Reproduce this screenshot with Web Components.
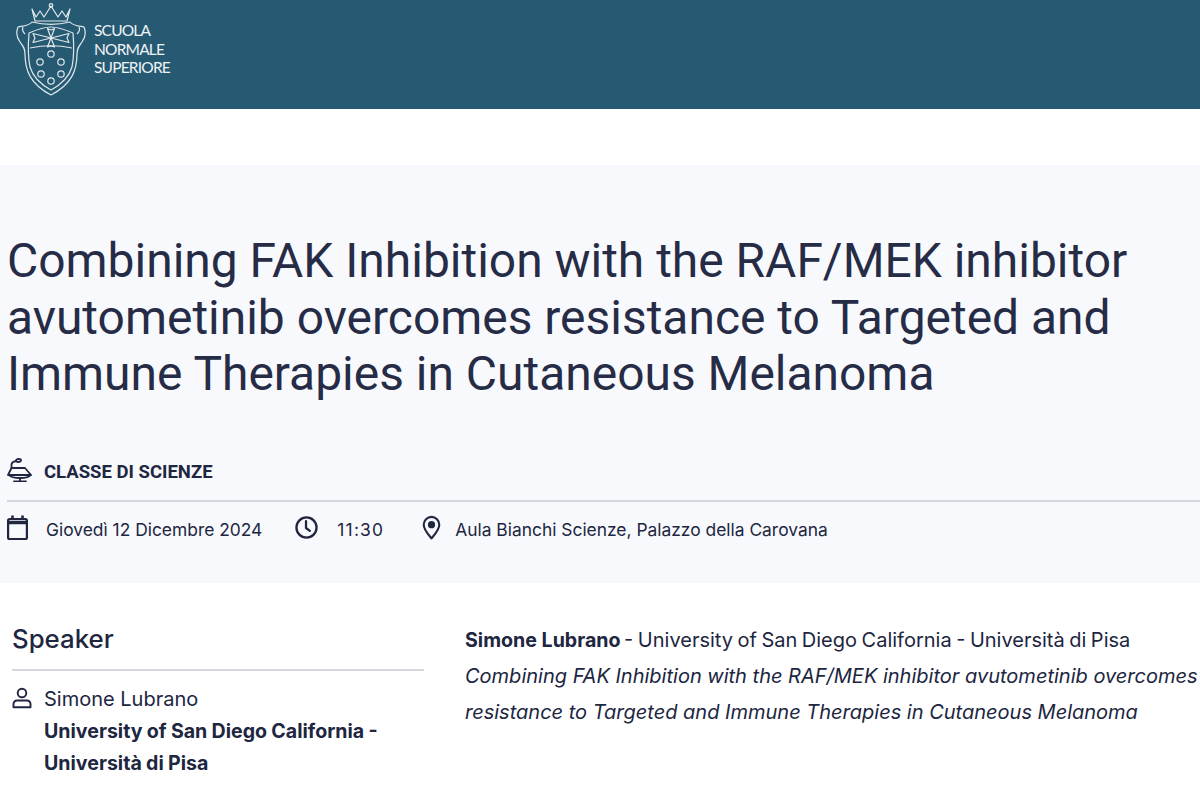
<!DOCTYPE html>
<html lang="it">
<head>
<meta charset="utf-8">
<title>Seminario</title>
<style>
  html, body { margin: 0; background: #fff; }
  body { font-family: Inter, "Liberation Sans", sans-serif; color: #20263f; overflow: hidden; height: 792px; }
</style>
</head>
<body>
<site-header></site-header>
<event-hero>
  <span slot="title">Combining FAK Inhibition with the RAF/MEK inhibitor avutometinib overcomes resistance to Targeted and Immune Therapies in Cutaneous Melanoma</span>
  <span slot="category">CLASSE DI SCIENZE</span>
  <meta-item icon="calendar" style="--gap:18px;--after:33px">Giovedì 12 Dicembre 2024</meta-item>
  <meta-item icon="clock" style="--gap:19px;--after:38px;letter-spacing:1.2px">11:30</meta-item>
  <meta-item icon="pin" style="--gap:14px">Aula Bianchi Scienze, Palazzo della Carovana</meta-item>
</event-hero>
<event-body>
  <speaker-card slot="side" name="Simone Lubrano">University of San Diego California - Università di Pisa</speaker-card>
  <p><b style="font-size:19.6px">Simone Lubrano</b> <span style="word-spacing:-1.1px;margin-left:-2px">- University of San Diego California - Università di Pisa</span><br>
  <i>Combining FAK Inhibition with the RAF/MEK inhibitor avutometinib overcomes resistance to Targeted and Immune Therapies in Cutaneous Melanoma</i></p>
</event-body>

<script>
const ICONS = {
  calendar: `<svg width="21" height="26" viewBox="0 0 21 26" fill="none" stroke="currentColor" stroke-width="2.2"><rect x="1.1" y="4" width="18.800" height="20" rx="1.500"/><path d="M1.100 7.500h18.800" stroke-width="3.500"/><path d="M5.500 .5v4M15.500 .5v4" stroke-width="2.600"/></svg>`,
  clock: `<svg width="23" height="23" viewBox="0 0 24 24" fill="none" stroke="currentColor" stroke-width="2.400"><circle cx="12" cy="12" r="10.500"/><path d="M11.500 5.500v7l4 3" stroke-linecap="round" stroke-linejoin="round"/></svg>`,
  pin: `<svg width="19" height="25" viewBox="0 0 20 26" fill="none" stroke="currentColor" stroke-width="2.200"><path d="M10 24.500C6 19.500 1.800 15 1.800 10a8.200 8.200 0 0 1 16.400 0c0 5-4.200 9.500-8.200 14.500z" stroke-linejoin="round"/><circle cx="10" cy="10" r="3.800" fill="currentColor" stroke="none"/></svg>`,
  person: `<svg width="20" height="22" viewBox="0 0 20 22" fill="none" stroke="currentColor" stroke-width="1.900"><circle cx="10" cy="6" r="4.300"/><path d="M5 13.500h10a3.500 3.500 0 0 1 3.500 3.500v3.200h-17V17A3.500 3.500 0 0 1 5 13.500z" stroke-linejoin="round"/></svg>`,
  lectern: `<svg width="25" height="24" viewBox="0 0 25 24" fill="none" stroke="currentColor" stroke-width="1.800" stroke-linecap="round" stroke-linejoin="round"><path d="M4.500 10V7C4.500 4.800 6 3.500 9 3"/><ellipse cx="11.500" cy="2.500" rx="2.500" ry="1.500"/><path d="M4.500 10H18l6 7H1z"/><path d="M2 17c2 2.500 5 3 11 3s9-.5 10.500-3"/><path d="M13 20v3.500M7 23.500h12"/></svg>`
}

class SiteHeader extends HTMLElement {
  constructor() {
    super()
    this.attachShadow({ mode: 'open' })
    this.shadowRoot.innerHTML = `
      <style>
        :host { display: flex; align-items: flex-start; height: 109px; background: #265a73; color: #eef3f5; box-sizing: border-box; padding: 2px 0 0 16px; }
        svg { display: block; flex: none; }
        .name { margin: 19px 0 0 7px; font: 15.500px/18.500px Lato, sans-serif; letter-spacing: -.8px; }
      </style>
      <svg width="71" height="94" viewBox="15 2 71 94" fill="none" stroke="#dfe8ec" stroke-width="1.200" stroke-linejoin="round">
        <path d="M31 9l4 8 4-6 4 6 7-11 7 11 4-6 4 6 4-8-3 12H34z"/>
        <circle cx="50" cy="5.500" r="1.800"/>
        <path d="M31 22c-3 4-9 4-14 5-2 5-1 11 2 15 3 4 5 6 5 12 0 16 5 30 26 41 21-11 26-25 26-41 0-6 2-8 5-12 3-4 4-10 2-15-5-1-11-1-14-5-12 3-26 3-38 0z"/>
        <path d="M24 34c-2-2-3-5-2-7M76 34c2-2 3-5 2-7"/>
        <path d="M28 33c7-3 15-6 22-6s15 3 22 6c1 12 1 24-1 34-3 10-10 17-21 23-11-6-18-13-21-23-2-10-2-22-1-34z"/>
        <path d="M29 48c14-3 28-3 42 0"/>
        <path d="M50 38L46.500 28.500 50 30l3.500-1.500zM50 38l18-4.500-2 4.500 2 4.500zM50 38l-18-4.500 2 4.500-2 4.500zM50 38l-3.500 9 3.500-1 3.500 1z"/>
        <circle cx="50" cy="54" r="3.200"/><circle cx="39" cy="62" r="3.200"/><circle cx="60" cy="62" r="3.200"/>
        <circle cx="40" cy="74" r="3.200"/><circle cx="60" cy="74" r="3.200"/><circle cx="50" cy="81" r="3.200"/>
      </svg>
      <div class="name">SCUOLA<br>NORMALE<br>SUPERIORE</div>
    `
  }
}

class EventHero extends HTMLElement {
  constructor() {
    super()
    this.attachShadow({ mode: 'open' })
    this.shadowRoot.innerHTML = `
      <style>
        :host { display: block; margin-top: 56px; height: 418px; background: #f8f9fd; box-sizing: border-box; padding: 68px 0 0 7px; color: #20263f; }
        h1 { margin: 0; font-family: Roboto, sans-serif; font-weight: 400; font-size: 47.950px; line-height: 56.500px; width: 1150px; color: #262c45; }
        .cat { display: flex; align-items: center; gap: 12px; margin-top: 53px; height: 32px; font-family: Roboto, sans-serif; font-weight: 700; font-size: 18.500px; }
        .cat svg { display: block; margin-top: -4px; }
        .meta { display: flex; align-items: center; border-top: 2px solid #d5d7de; margin-top: 12px; padding-top: 13px; }
      </style>
      <h1><slot name="title"></slot></h1>
      <div class="cat">${ICONS.lectern}<slot name="category"></slot></div>
      <div class="meta"><slot></slot></div>
    `
  }
}

class MetaItem extends HTMLElement {
  constructor() {
    super()
    const icon = ICONS[this.getAttribute('icon')]
    this.attachShadow({ mode: 'open' })
    this.shadowRoot.innerHTML = `
      <style>
        :host { display: flex; align-items: center; gap: var(--gap, 12px); margin-right: var(--after, 0); font-size: 17.400px; line-height: 30px; }
        svg { display: block; margin-top: -4px; }
      </style>
      ${icon}<slot></slot>
    `
  }
}

class EventBody extends HTMLElement {
  constructor() {
    super()
    this.attachShadow({ mode: 'open' })
    this.shadowRoot.innerHTML = `
      <style>
        :host { display: grid; grid-template-columns: 412px 1fr; column-gap: 41px; padding: 38px 0 0 12px; font-size: 20px; line-height: 36px; overflow: hidden; }
        .main { margin-top: 1px; width: 745px; }
        ::slotted(p) { margin: 0; }
      </style>
      <slot name="side"></slot>
      <div class="main"><slot></slot></div>
    `
  }
}

class SpeakerCard extends HTMLElement {
  constructor() {
    super()
    this.attachShadow({ mode: 'open' })
    this.shadowRoot.innerHTML = `
      <style>
        :host { display: block; }
        h2 { margin: 0; font-weight: 500; font-size: 25.800px; line-height: 36px; height: 48px; border-bottom: 2px solid #d5d7de; }
        .row { display: flex; gap: 12px; margin-top: 12px; font-size: 20px; line-height: 32px; }
        svg { display: block; margin-top: 4px; flex: none; }
        b { display: block; font-weight: 700; font-size: 19.600px; word-spacing: -.4px; }
      </style>
      <h2>Speaker</h2>
      <div class="row">${ICONS.person}<div>${this.getAttribute('name')}<b><slot></slot></b></div></div>
    `
  }
}

customElements.define('site-header', SiteHeader)
customElements.define('event-hero', EventHero)
customElements.define('meta-item', MetaItem)
customElements.define('event-body', EventBody)
customElements.define('speaker-card', SpeakerCard)
</script>
</body>
</html>
